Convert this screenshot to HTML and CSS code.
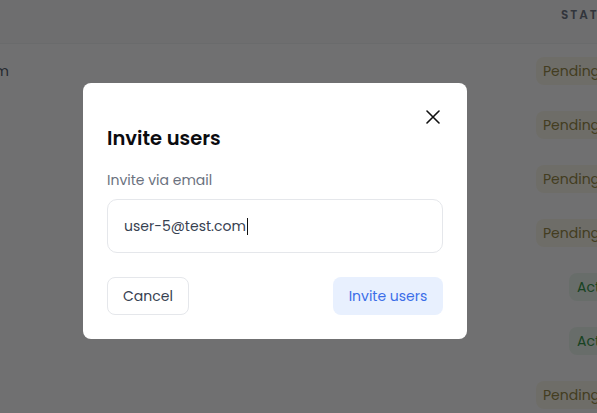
FILE: index.html
```html
<!DOCTYPE html>
<html lang="en">
<head>
<meta charset="utf-8">
<title>Invite users</title>
<link rel="stylesheet" href="styles.css">
</head>
<body>
<div class="page">
  <div class="table-head">
    <div class="spacer"></div>
    <div class="th-status">STATUS</div>
  </div>
  <div class="row">
    <div class="email"><span>user-1@example.com</span></div>
    <div class="spacer"></div>
    <div class="status"><span class="badge pending">Pending</span></div>
  </div>
  <div class="row">
    <div class="email"></div>
    <div class="spacer"></div>
    <div class="status"><span class="badge pending">Pending</span></div>
  </div>
  <div class="row">
    <div class="email"></div>
    <div class="spacer"></div>
    <div class="status"><span class="badge pending">Pending</span></div>
  </div>
  <div class="row">
    <div class="email"></div>
    <div class="spacer"></div>
    <div class="status"><span class="badge pending">Pending</span></div>
  </div>
  <div class="row">
    <div class="email"></div>
    <div class="spacer"></div>
    <div class="status"><span class="badge active">Active</span></div>
  </div>
  <div class="row">
    <div class="email"></div>
    <div class="spacer"></div>
    <div class="status"><span class="badge active">Active</span></div>
  </div>
  <div class="row">
    <div class="email"></div>
    <div class="spacer"></div>
    <div class="status"><span class="badge pending">Pending</span></div>
  </div>
</div>

<div class="overlay">
  <div class="modal" role="dialog" aria-labelledby="invite-title">
    <div class="modal-top">
      <button class="close" aria-label="Close">
        <svg width="14" height="14" viewBox="0 0 14 14" fill="none" stroke="#111" stroke-width="1.6" stroke-linecap="round">
          <path d="M1 1L13 13M13 1L1 13"/>
        </svg>
      </button>
    </div>
    <h2 id="invite-title" class="title">Invite users</h2>
    <label class="label" for="email">Invite via email</label>
    <div class="input"><span class="value">user-5@test.com</span><span class="caret"></span></div>
    <div class="actions">
      <button class="btn btn-cancel">Cancel</button>
      <button class="btn btn-invite">Invite users</button>
    </div>
  </div>
</div>
</body>
</html>
```

FILE: styles.css
```css
* { box-sizing: border-box; }
html, body {
  margin: 0;
  padding: 0;
}
body {
  width: 597px;
  height: 413px;
  overflow: hidden;
  background: #ffffff;
  font-family: "Poppins", "Open Sans", "Noto Sans", sans-serif;
  color: #111827;
}
.page {
  display: flex;
  flex-direction: column;
}
.table-head {
  height: 44px;
  display: flex;
  align-items: center;
  background: #f9fafb;
  border-bottom: 1px solid #f1f2f4;
}
.spacer { flex: 1; }
.th-status {
  width: 36px;
  margin-top: -14px;
  font-size: 12px;
  font-weight: 600;
  letter-spacing: 2px;
  color: #6b7280;
  white-space: nowrap;
}
.row {
  height: 54px;
  display: flex;
  align-items: center;
}
.email {
  width: 9px;
  display: flex;
  justify-content: flex-end;
  overflow: hidden;
  white-space: nowrap;
  font-size: 14px;
  color: #4b5563;
}
.status {
  width: 61px;
  white-space: nowrap;
}
.badge {
  display: inline-flex;
  align-items: center;
  height: 28px;
  padding: 0 8px;
  border-radius: 8px;
  font-size: 14px;
}
.pending {
  padding-left: 7px;
  background: #fbf8ea;
  color: #948640;
}
.active {
  margin-left: 33px;
  background: #edf8ef;
  color: #2f9444;
}
.overlay {
  position: fixed;
  inset: 0;
  background: rgba(8, 9, 11, 0.58);
  display: flex;
  align-items: flex-start;
  padding: 83px 0 0 83px;
}
.modal {
  width: 384px;
  background: #ffffff;
  border-radius: 8px;
  padding: 24px;
  display: flex;
  flex-direction: column;
}
.modal-top {
  display: flex;
  justify-content: flex-end;
  height: 20px;
}
.close {
  width: 20px;
  height: 20px;
  padding: 0;
  border: 0;
  background: transparent;
  display: flex;
  align-items: center;
  justify-content: center;
}
.title {
  margin: 0;
  font-size: 19.5px;
  line-height: 24px;
  font-weight: 600;
  color: #0b0b0f;
}
.label {
  margin-top: 19px;
  font-size: 14px;
  line-height: 20px;
  color: #6b7280;
}
.input {
  margin-top: 9px;
  height: 54px;
  border: 1px solid #e5e7eb;
  border-radius: 10px;
  display: flex;
  align-items: center;
  padding: 0 16px;
  font-size: 14px;
  color: #374151;
}
.caret {
  display: inline-block;
  width: 1px;
  height: 17px;
  background: #111;
  margin-left: 1px;
}
.actions {
  margin-top: 24px;
  display: flex;
  justify-content: space-between;
}
.btn {
  height: 38px;
  border-radius: 8px;
  font-family: inherit;
  font-size: 14px;
  padding: 0;
  white-space: nowrap;
}
.btn-cancel {
  width: 82px;
  background: #ffffff;
  border: 1px solid #e5e7eb;
  color: #374151;
}
.btn-invite {
  width: 110px;
  border: 0;
  background: #e8f0fe;
  color: #3b6ee8;
}
```
